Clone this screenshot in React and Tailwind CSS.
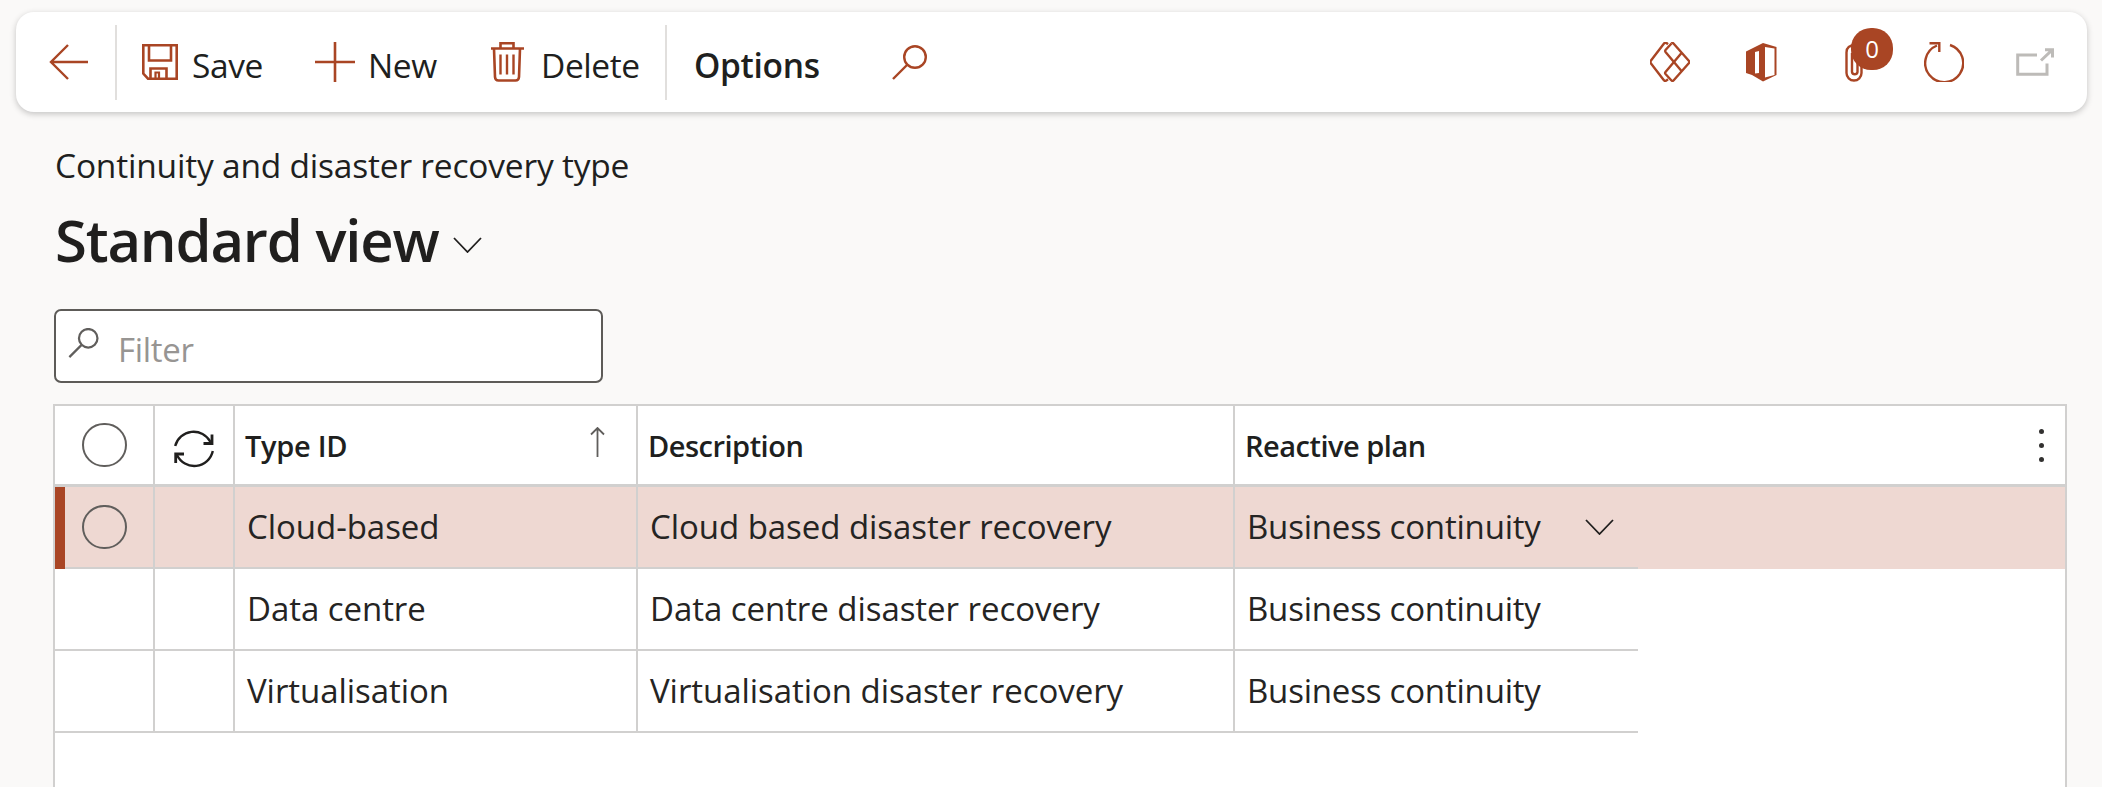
import React from "react";

const A = "#a94524";

const Back = () => (
  <svg width="39" height="36" viewBox="0 0 39 36" fill="none" stroke={A} strokeWidth="2.4">
    <path d="M19 1 2 18l17 17M2 18h37" />
  </svg>
);
const SaveI = () => (
  <svg width="36" height="36" viewBox="0 0 36 36" fill="none" stroke={A} strokeWidth="2.6">
    <path d="M1.300 1.300H34.700V34.700H6L1.300 29.500Z" />
    <path d="M7 1.500V16.500H29V1.500" />
    <path d="M8.500 34.500V24.500H24.500V34.500" />
    <path d="M13.500 34.500V28.500H17V34.500" strokeWidth="2.200" />
  </svg>
);
const Plus = () => (
  <svg width="40" height="40" viewBox="0 0 40 40" fill="none" stroke={A} strokeWidth="2.6">
    <path d="M20 0v40M0 20h40" />
  </svg>
);
const Trash = () => (
  <svg width="33" height="40" viewBox="0 0 33 40" fill="none" stroke={A} strokeWidth="2.6">
    <path d="M0 6.500h33M9.500 6.500V1.300h13v5.200" />
    <path d="M3 6.500 4 35q.2 3.500 3.500 3.500h17q3.300 0 3.500-3.500l1-28.500" />
    <path d="M9.500 12.500v20M16 12.500v20M22.500 12.500v20" strokeWidth="2.400" />
  </svg>
);
const Search = ({ c = A, w = 35, h = 35, sw = 2.4 }) => (
  <svg width={w} height={h} viewBox="0 0 35 35" fill="none" stroke={c} strokeWidth={sw}>
    <circle cx="23" cy="12" r="10.800" />
    <path d="M15 20 1 34" />
  </svg>
);
const Diamonds = () => (
  <svg width="40" height="40" viewBox="0 0 40 40" fill="none" stroke={A} strokeWidth="2.4" strokeLinejoin="round">
    <path d="M18 2.200 16.500 1q-1.200-.8-2.300.3L1 18.500q-1.200 1.500 0 3L13.700 38q1.200 1.500 2.600.600l1.700-1.300" />
    <path d="M21.500 1.500q1-1 2 0L39 19q1 1 0 2L23.500 38.500q-1 1-2 0L15.500 32q-.8-1 0-2L31.500 11" />
    <path d="M21.500 1.500 15.500 8q-.8 1 0 2L31.500 29" />
  </svg>
);
const Office = () => (
  <svg width="31" height="39" viewBox="0 0 31 39">
    <path
      fill={A}
      fillRule="evenodd"
      d="M17 0 30.500 4V32L17 38.500 6 32 0 30V8.500ZM9 9V30.500L13 30V8ZM19 4V34.500L28.500 32V5.500Z"
    />
  </svg>
);
const Clip = () => (
  <svg width="19" height="39" viewBox="0 0 19 39" fill="none" stroke={A} strokeWidth="2.400">
    <path d="M11 2Q1.500 2 1.500 9.500V30A7.500 7.500 0 0 0 16.500 30V15" />
    <path d="M7 10V29A2.800 2.800 0 0 0 12.500 29V15" />
  </svg>
);
const Refresh = () => (
  <svg width="40" height="40" viewBox="0 0 40 40" fill="none" stroke={A} strokeWidth="2.4">
    <path d="M26 3A19 19 0 1 1 13 3.500" />
    <path d="M5.500 1.300H15.300V10" />
  </svg>
);
const OpenNew = () => (
  <svg width="38" height="28" viewBox="0 0 38 28" fill="none" stroke="#bdbbb8" strokeWidth="3">
    <path d="M21 7H1.700V26.300H31V15.500" />
    <path d="M25 12.500 36.500 1.700M29 1.700H36.500V9.500" />
  </svg>
);
const Chevron = ({ w = 29, h = 16, c = "#201f1e" }) => (
  <svg width={w} height={h} viewBox="0 0 29 16" fill="none" stroke={c} strokeWidth="1.800">
    <path d="M1 1l13.500 14L28 1" />
  </svg>
);
const Sync = () => (
  <svg width="40" height="40" viewBox="0 0 40 40" fill="none" stroke="#201f1e" strokeWidth="2.400">
    <path d="M1.200 18A19 19 0 0 1 36.500 14" />
    <path d="M38.800 23A19 19 0 0 1 3 27" />
    <path d="M38 6.500V15.500H29.500M1.700 35V26H10" strokeWidth="2.800" />
  </svg>
);
const Up = () => (
  <svg width="15" height="30" viewBox="0 0 15 30" fill="none" stroke="#605e5c" strokeWidth="1.800">
    <path d="M7.500 1v29M1 7.500 7.500 1 14 7.500" />
  </svg>
);
const Radio = () => <div className="w-[45px] h-[44px] rounded-full border-2 border-[#605e5c]" />;

const Cmd = ({ icon, text, ml, gap, w }) => (
  <div className="flex items-center" style={{ marginLeft: ml }}>
    {icon}
    <span className="text-[33.5px] text-[#201f1e] whitespace-nowrap mt-[6px] tracking-[-0.4px]" style={{ marginLeft: gap, width: w }}>
      {text}
    </span>
  </div>
);

const Line = "border-r-2 border-[#d1d0cf]";
const CellText = "text-[33px] text-[#252423] tracking-[-0.05px]";

const Row = ({ id, desc, sel }) => {
  const b = "border-b-2 border-[#d1d0cf]";
  return (
    <div className={`flex h-[82px] ${sel ? "bg-[#eed8d2]" : ""}`}>
      <div className={`relative w-[100px] flex items-center pl-[27px] ${Line} ${b}`}>
        {sel && <div className="absolute left-0 top-0 bottom-[-2px] w-[10px] bg-[#a94524]" />}
        {sel && <Radio />}
      </div>
      <div className={`w-[80px] ${Line} ${b}`} />
      <div className={`w-[403px] flex items-center pl-[12px] ${Line} ${b} ${CellText}`}>{id}</div>
      <div className={`w-[597px] flex items-center pl-[12px] ${Line} ${b} ${CellText}`}>{desc}</div>
      <div className={`w-[403px] flex items-center pl-[12px] ${b} text-[33px] text-[#252423] tracking-[-0.2px]`}>
        <span className="w-[338px]">Business continuity</span>
        {sel && <Chevron />}
      </div>
    </div>
  );
};

const Head = ({ className, children }) => (
  <div className={`flex items-center pt-[2px] text-[29px] font-semibold text-[#201f1e] tracking-[-0.5px] ${className}`}>{children}</div>
);

export default function App() {
  return (
    <div className="w-[2102px] h-[787px] overflow-hidden bg-[#faf9f8] flex flex-col font-['Open_Sans',sans-serif]">
      <div className="ml-4 mt-3 w-[2071px] h-[100px] shrink-0 rounded-[18px] bg-white shadow-[0_2px_6px_rgba(0,0,0,0.22)] flex items-center">
        <div className="ml-[33px]"><Back /></div>
        <div className="ml-[27px] w-[2px] h-[75px] bg-[#e1dfdd]" />
        <Cmd ml="25px" gap="14px" w="69px" icon={<SaveI />} text="Save" />
        <Cmd ml="54px" gap="13px" w="68px" icon={<Plus />} text="New" />
        <Cmd ml="55px" gap="17px" w="97px" icon={<Trash />} text="Delete" />
        <div className="ml-[27px] w-[2px] h-[75px] bg-[#e1dfdd]" />
        <span className="ml-[27px] w-[169px] mt-[6px] text-[33.5px] font-semibold text-[#201f1e] tracking-[-0.3px]">Options</span>
        <div className="ml-[29px]"><Search /></div>
        <div className="ml-auto flex items-center mr-[33px]">
          <Diamonds />
          <div className="ml-[56px]"><Office /></div>
          <div className="ml-[68px] relative">
            <Clip />
            <div className="absolute left-[6px] top-[-15px] w-[42px] h-[42px] rounded-[20px] bg-[#a94524] text-white text-[24px] flex items-center justify-center">0</div>
          </div>
          <div className="ml-[60px]"><Refresh /></div>
          <div className="ml-[52px]"><OpenNew /></div>
        </div>
      </div>

      <div className="ml-[55px] mt-[32px] text-[33.5px] leading-[42px] text-[#201f1e] tracking-[-0.2px] whitespace-nowrap">Continuity and disaster recovery type</div>
      <div className="ml-[55px] mt-[18px] flex items-center h-[70px]">
        <span className="text-[58px] font-semibold text-[#201f1e] tracking-[-1.2px] whitespace-nowrap w-[398px]">Standard view</span>
        <div className="mt-[11px]"><Chevron /></div>
      </div>

      <div className="ml-[54px] mt-[35px] w-[549px] h-[74px] shrink-0 rounded-[7px] border-2 border-[#5d5b58] bg-white flex items-center">
        <div className="ml-[12px] mb-[6px]"><Search c="#605e5c" w={31} h={30} sw={2.6} /></div>
        <span className="ml-[19px] text-[33px] text-[#979593] mt-[8px] tracking-[-0.3px]">Filter</span>
      </div>

      <div className="ml-[53px] mt-[21px] w-[2014px] flex-1 bg-white border-2 border-b-0 border-[#d1d0cf]">
        <div className="flex h-[81px] border-b-[3px] border-[#d1d0cf]">
          <div className={`w-[100px] flex items-center pl-[27px] ${Line}`}><Radio /></div>
          <div className={`w-[80px] flex items-center pl-[19px] pt-[6px] ${Line}`}><Sync /></div>
          <Head className={`w-[403px] pl-[10px] justify-between pr-[31px] ${Line}`}>
            <span className="tracking-[-0.3px]">Type ID</span>
            <div className="mb-[8px]"><Up /></div>
          </Head>
          <Head className={`w-[597px] pl-[10px] ${Line}`}>Description</Head>
          <Head className="flex-1 pl-[10px] justify-between pr-[21px]">
            <span>Reactive plan</span>
            <div className="flex flex-col gap-[9px] mb-[2px]">
              <div className="w-[5px] h-[5px] rounded-full bg-[#323130]" />
              <div className="w-[5px] h-[5px] rounded-full bg-[#323130]" />
              <div className="w-[5px] h-[5px] rounded-full bg-[#323130]" />
            </div>
          </Head>
        </div>
        <Row id="Cloud-based" desc="Cloud based disaster recovery" sel />
        <Row id="Data centre" desc="Data centre disaster recovery" />
        <Row id="Virtualisation" desc="Virtualisation disaster recovery" />
      </div>
    </div>
  );
}
